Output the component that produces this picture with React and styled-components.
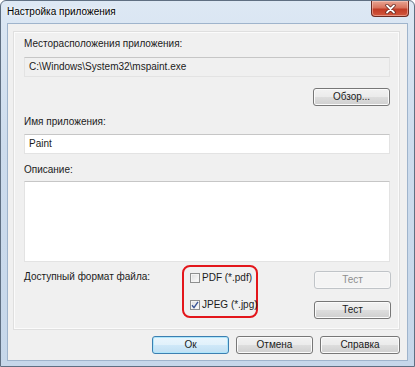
import React from "react";
import styled, { createGlobalStyle } from "styled-components";

const Global = createGlobalStyle`
  * { box-sizing: border-box; }
  body {
    margin: 0;
    background: #fff;
    font-family: "Liberation Sans", Arial, sans-serif;
  }
`;

const Window = styled.div`
  width: 415px;
  height: 367px;
  border: 1px solid #5f6f82;
  border-radius: 6px 6px 0 0;
  background: linear-gradient(180deg, #dde8f4 0%, #cddced 40%, #c6d7ea 100%);
  display: flex;
  flex-direction: column;
  overflow: hidden;
`;

const TitleBar = styled.div`
  height: 22px;
  display: flex;
  justify-content: space-between;
  align-items: flex-start;
  padding: 0 5px 0 6px;
`;

const Title = styled.div`
  font-size: 10px;
  line-height: 22px;
  color: #000;
  text-shadow: 0 0 6px #fff, 0 0 3px #fff;
`;

const CloseButton = styled.div`
  width: 38px;
  height: 16px;
  border: 1px solid #6b2b22;
  border-top: none;
  border-radius: 0 0 4px 4px;
  background: linear-gradient(180deg, #e8a593 0%, #d9735d 45%, #c13c26 55%, #d2583e 100%);
  box-shadow: inset 0 0 0 1px rgba(255, 220, 210, 0.45);
  display: flex;
  align-items: center;
  justify-content: center;
`;

const Client = styled.div`
  flex: 1;
  margin: 0 6px 5px 6px;
  border: 1px solid #9fb4cc;
  background: #f0f0f0;
  display: flex;
  flex-direction: column;
  padding: 7px 7px 6px 5px;
`;

const Panel = styled.div`
  height: 299px;
  border: 1px solid #dfdfdf;
  box-shadow: inset 0 0 0 1px #fbfbfb;
  padding: 5px 9px 0 10px;
  display: flex;
  flex-direction: column;
`;

const Label = styled.div`
  font-size: 10px;
  line-height: 14px;
  color: #1b1b1b;
  margin-top: ${(p) => p.$top || 0}px;
`;

const Field = styled.div`
  height: ${(p) => p.$h || 20}px;
  margin-top: ${(p) => p.$top || 0}px;
  border: 1px solid #e3e3e3;
  border-top-color: #c6c6c6;
  background: ${(p) => (p.$readonly ? "#f0f0f0" : "#fff")};
  font-size: 10px;
  line-height: 18px;
  color: #1b1b1b;
  padding: 0 4px;
`;

const RightRow = styled.div`
  display: flex;
  justify-content: flex-end;
  gap: 7px;
  margin-top: ${(p) => p.$top || 0}px;
`;

const Button = styled.div`
  width: ${(p) => p.$w || 77}px;
  height: 18px;
  border: 1px solid ${(p) => (p.$disabled ? "#c0c4c8" : p.$default ? "#3c7fb1" : "#777")};
  border-radius: 3px;
  background: ${(p) =>
    p.$disabled
      ? "#f4f4f4"
      : p.$default
      ? "linear-gradient(180deg, #eaf6fd 0%, #e1f1fb 48%, #cfe8f8 52%, #c0dff3 100%)"
      : "linear-gradient(180deg, #f2f2f2 0%, #ebebeb 48%, #dddddd 52%, #cfcfcf 100%)"};
  box-shadow: inset 0 0 0 1px ${(p) => (p.$disabled ? "#f8f8f8" : p.$default ? "#aee6fb" : "#fbfbfb")};
  font-size: 10px;
  line-height: 16px;
  text-align: center;
  color: ${(p) => (p.$disabled ? "#8e8e8e" : "#1b1b1b")};
`;

const FormatRow = styled.div`
  display: flex;
  margin-top: 3px;
`;

const FormatLabel = styled(Label)`
  width: 158px;
  margin-top: 5px;
`;

const Group = styled.div`
  width: 76px;
  height: 53px;
  border: 2px solid #e3161b;
  border-radius: 8px;
  display: flex;
  flex-direction: column;
  justify-content: space-between;
  padding: 4px 0 4px 6px;
`;

const Check = styled.label`
  display: flex;
  align-items: center;
  gap: 2px;
  font-size: 10px;
  line-height: 14px;
  color: #1b1b1b;
  white-space: nowrap;
`;

const Box = styled.span`
  flex-shrink: 0;
  width: 10px;
  height: 10px;
  border: 1px solid #8e8f8f;
  background: linear-gradient(135deg, #dcdcdc 0%, #f4f4f4 70%, #fff 100%);
  box-shadow: inset 0 0 0 1px #f4f4f4;
  display: flex;
  align-items: center;
  justify-content: center;
`;

const TestColumn = styled.div`
  margin-left: auto;
  margin-right: -1px;
  display: flex;
  flex-direction: column;
  gap: 12px;
  padding-top: 6px;
`;

const CheckBox = ({ checked, children }) => (
  <Check>
    <Box>
      {checked && (
        <svg width="8" height="8" viewBox="0 0 8 8">
          <path d="M1 4.2 L3 6.6 L7 0.8" fill="none" stroke="#3a5596" strokeWidth="1.4" />
        </svg>
      )}
    </Box>
    {children}
  </Check>
);

export default function App() {
  return (
    <>
      <Global />
      <Window>
        <TitleBar>
          <Title>Настройка приложения</Title>
          <CloseButton>
            <svg width="11" height="10" viewBox="0 0 11 10">
              <path d="M2 1.5 L9 8.5 M9 1.5 L2 8.5" stroke="#5a1f18" strokeWidth="3.2" strokeLinecap="round" />
              <path d="M2 1.5 L9 8.5 M9 1.5 L2 8.5" stroke="#fff" strokeWidth="1.8" strokeLinecap="round" />
            </svg>
          </CloseButton>
        </TitleBar>
        <Client>
          <Panel>
            <Label>Месторасположения приложения:</Label>
            <Field $top={6} $readonly>C:\Windows\System32\mspaint.exe</Field>
            <RightRow $top={11}>
              <Button>Обзор...</Button>
            </RightRow>
            <Label $top={9}>Имя приложения:</Label>
            <Field $top={5}>Paint</Field>
            <Label $top={9}>Описание:</Label>
            <Field $top={4} $h={81} />
            <FormatRow>
              <FormatLabel>Доступный формат файла:</FormatLabel>
              <Group>
                <CheckBox>PDF (*.pdf)</CheckBox>
                <CheckBox checked>JPEG (*.jpg)</CheckBox>
              </Group>
              <TestColumn>
                <Button $disabled>Тест</Button>
                <Button>Тест</Button>
              </TestColumn>
            </FormatRow>
          </Panel>
          <RightRow $top={6}>
            <Button $default>Ок</Button>
            <Button>Отмена</Button>
            <Button $w={80}>Справка</Button>
          </RightRow>
        </Client>
      </Window>
    </>
  );
}
